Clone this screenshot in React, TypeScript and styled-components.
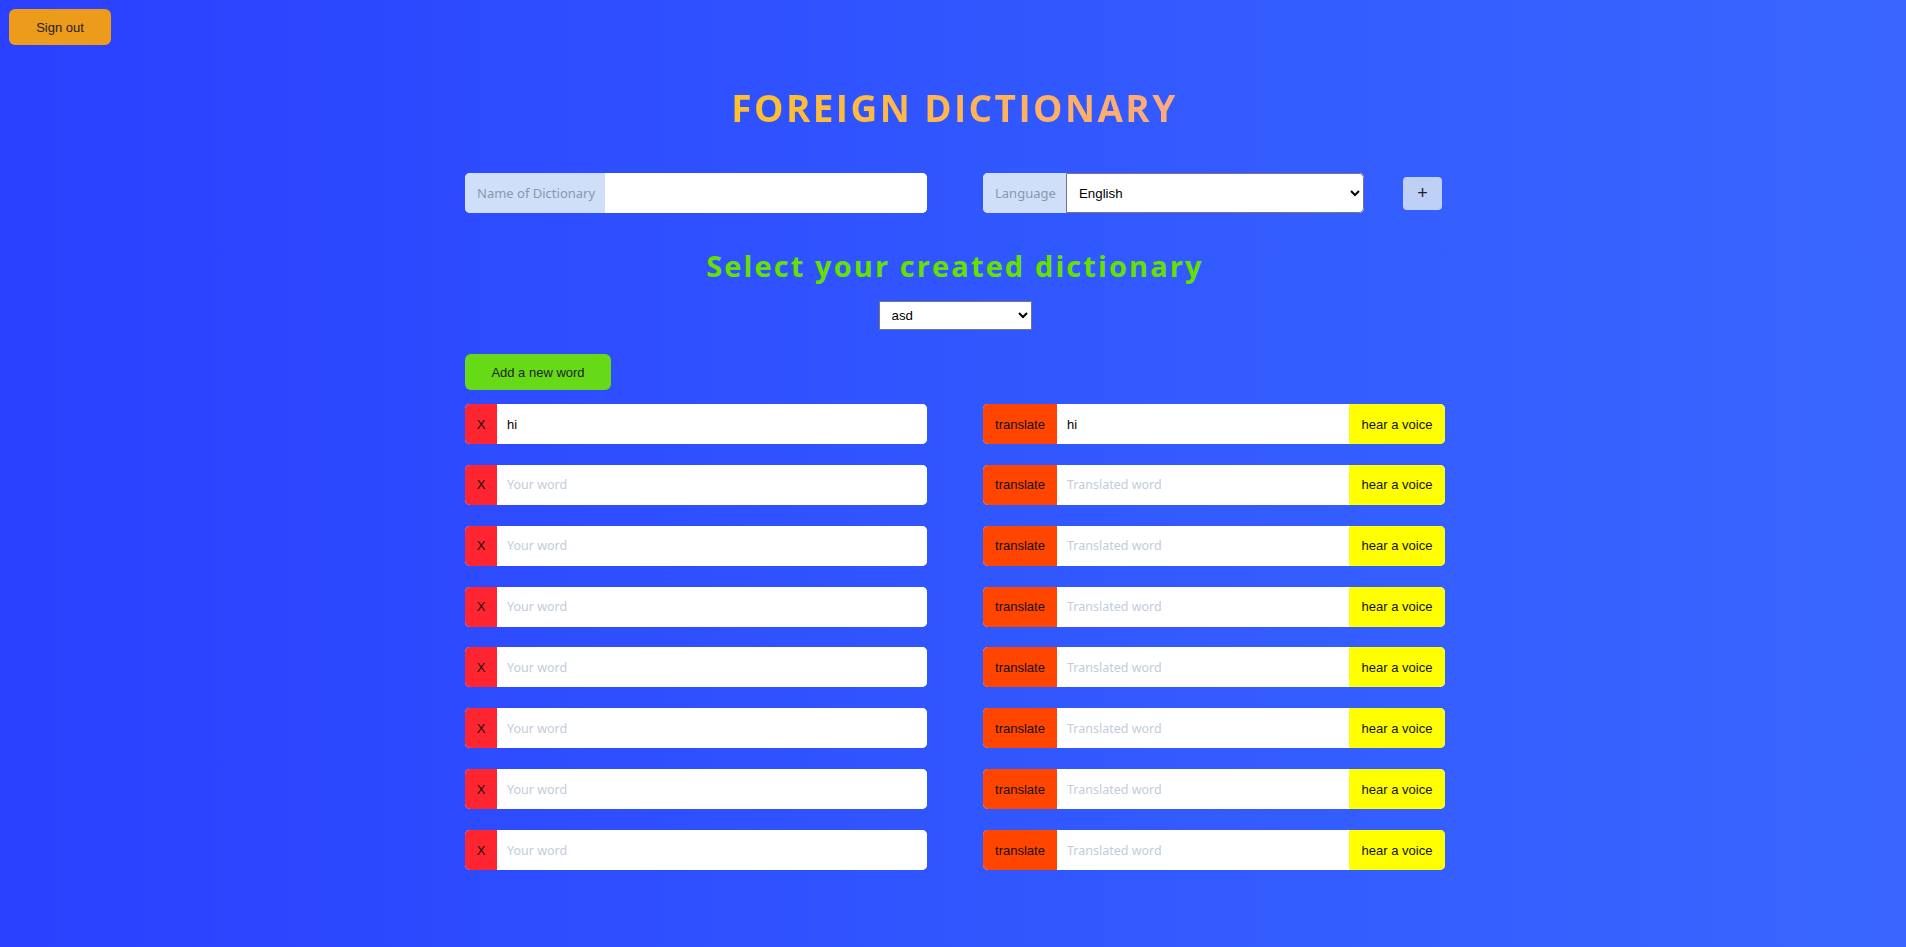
import React from "react";
import styled, { createGlobalStyle } from "styled-components";

const GlobalStyle = createGlobalStyle`
  html, body { margin: 0; padding: 0; }
  body {
    min-height: 100vh;
    background: linear-gradient(90deg, #2a40ff 0%, #3158ff 55%, #3a66ff 100%);
    font-family: "Liberation Sans", Arial, sans-serif;
  }
  #root { min-height: 100vh; }
`;

const Page = styled.div`
  min-height: 947px;
  padding: 9px 0 40px;
  box-sizing: border-box;
`;

const SignOut = styled.button`
  display: block;
  margin-left: 9px;
  width: 102px;
  height: 36px;
  border: none;
  border-radius: 6px;
  background: #ec9b1a;
  color: #222;
  font-family: "Liberation Sans", Arial, sans-serif;
  font-size: 13px;
  cursor: pointer;
`;

const Title = styled.h1`
  margin: 38px 0 0;
  text-align: center;
  font-family: "Open Sans", "Noto Sans", sans-serif;
  font-weight: 700;
  font-size: 37px;
  line-height: 50px;
  letter-spacing: 2.4px;
  padding-left: 3px;
  span {
    background: linear-gradient(90deg, #ffc12a 0%, #feb35a 60%, #fdab7c 100%);
    -webkit-background-clip: text;
    background-clip: text;
    color: transparent;
  }
`;

const Container = styled.div`
  width: 984px;
  padding-left: 4px;
  box-sizing: border-box;
  margin: 0 auto;
`;

const TopRow = styled.div`
  display: flex;
  align-items: center;
  margin-top: 40px;
`;

const Group = styled.div<{ $w: number }>`
  display: flex;
  width: ${(p) => p.$w}px;
  height: 40px;
  border-radius: 5px;
  overflow: hidden;
  background: #fff;
`;

const Label = styled.span<{ $w: number }>`
  flex: 0 0 ${(p) => p.$w}px;
  display: flex;
  align-items: center;
  padding-left: 12px;
  box-sizing: border-box;
  background: #cfdffa;
  color: #8a97ad;
  font-family: "Noto Sans", "Open Sans", sans-serif;
  font-size: 13px;
`;

const TextInput = styled.input`
  flex: 1;
  min-width: 0;
  border: none;
  outline: none;
  padding: 0 10px;
  font-family: "Liberation Sans", Arial, sans-serif;
  font-size: 13px;
  color: #000;
  background: #fff;
  &::placeholder {
    color: #c3ccdb;
    font-family: "Noto Sans", "Open Sans", sans-serif;
    font-size: 12.5px;
  }
`;

const LangSelect = styled.select`
  flex: 1;
  min-width: 0;
  border: 1px solid #767676;
  border-radius: 0 5px 5px 0;
  padding: 0 8px;
  font-family: "Liberation Sans", Arial, sans-serif;
  font-size: 13.3px;
  color: #000;
  background: #fff;
`;

const PlusButton = styled.button`
  width: 39px;
  height: 33px;
  margin-left: 39px;
  border: none;
  border-radius: 4px;
  background: #bfd0f7;
  color: #222;
  font-size: 18px;
  font-family: "Liberation Sans", Arial, sans-serif;
  line-height: 1;
  cursor: pointer;
`;

const SelectSection = styled.div`
  display: flex;
  flex-direction: column;
  align-items: center;
`;

const SubTitle = styled.h2`
  margin: 33px 0 0;
  font-family: "Open Sans", "Noto Sans", sans-serif;
  font-weight: 700;
  font-size: 29px;
  line-height: 40px;
  letter-spacing: 2.1px;
  color: #66e000;
`;

const DictSelect = styled.select`
  margin-top: 15px;
  width: 153px;
  height: 29px;
  border: 1px solid #767676;
  border-radius: 0;
  padding: 0 8px;
  font-family: "Liberation Sans", Arial, sans-serif;
  font-size: 13.3px;
  background: #fff;
  color: #000;
`;

const AddButton = styled.button`
  display: block;
  margin-top: 24px;
  width: 146px;
  height: 36px;
  border: none;
  border-radius: 6px;
  background: #66da17;
  color: #222;
  font-family: "Liberation Sans", Arial, sans-serif;
  font-size: 13px;
  cursor: pointer;
`;

const WordGrid = styled.div`
  display: grid;
  grid-template-columns: 462px 462px;
  column-gap: 56px;
  row-gap: 20.86px;
  margin-top: 14px;
`;

const Row = styled.div`
  display: flex;
  height: 40px;
  border-radius: 5px;
  overflow: hidden;
  background: #fff;
`;

const Tag = styled.span<{ $bg: string; $w: number }>`
  flex: 0 0 ${(p) => p.$w}px;
  display: flex;
  align-items: center;
  justify-content: center;
  background: ${(p) => p.$bg};
  color: #111;
  font-family: "Liberation Sans", Arial, sans-serif;
  font-size: 13px;
`;

const rows = Array.from({ length: 8 }, (_, i) => ({
  word: i === 0 ? "hi" : "",
  tr: i === 0 ? "hi" : "",
}));

export default function App() {
  return (
    <>
      <GlobalStyle />
      <Page>
        <SignOut>Sign out</SignOut>
        <Title>
          <span>FOREIGN DICTIONARY</span>
        </Title>
        <Container>
          <TopRow>
            <Group $w={462}>
              <Label $w={140}>Name of Dictionary</Label>
              <TextInput />
            </Group>
            <Group $w={381} style={{ marginLeft: 56 }}>
              <Label $w={83}>Language</Label>
              <LangSelect defaultValue="English">
                <option>English</option>
              </LangSelect>
            </Group>
            <PlusButton>+</PlusButton>
          </TopRow>
          <SelectSection>
            <SubTitle>Select your created dictionary</SubTitle>
            <DictSelect defaultValue="asd">
              <option>asd</option>
            </DictSelect>
          </SelectSection>
          <AddButton>Add a new word</AddButton>
          <WordGrid>
            {rows.map((r, i) => (
              <React.Fragment key={i}>
                <Row>
                  <Tag $bg="#ff2530" $w={32}>X</Tag>
                  <TextInput placeholder="Your word" defaultValue={r.word} />
                </Row>
                <Row>
                  <Tag $bg="#ff4500" $w={74}>translate</Tag>
                  <TextInput placeholder="Translated word" defaultValue={r.tr} />
                  <Tag $bg="#ffff00" $w={96}>hear a voice</Tag>
                </Row>
              </React.Fragment>
            ))}
          </WordGrid>
        </Container>
      </Page>
    </>
  );
}
